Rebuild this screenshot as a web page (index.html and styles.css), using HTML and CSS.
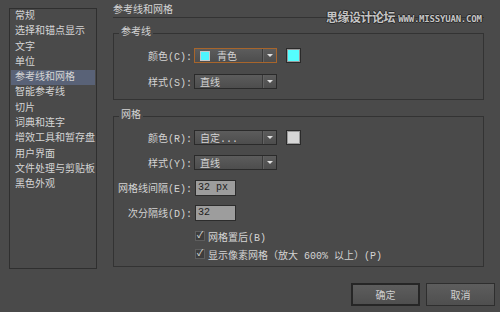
FILE: index.html
```html
<!DOCTYPE html>
<html lang="zh-CN">
<head>
    <meta charset="UTF-8">
    <title>首选项 - 参考线和网格</title>
    <link rel="stylesheet" href="styles.css">
</head>
<body>
    <div class="dialog">
        <div class="content">
            <ul class="nav">
                <li>常规</li>
                <li>选择和锚点显示</li>
                <li>文字</li>
                <li>单位</li>
                <li class="active">参考线和网格</li>
                <li>智能参考线</li>
                <li>切片</li>
                <li>词典和连字</li>
                <li>增效工具和暂存盘</li>
                <li>用户界面</li>
                <li>文件处理与剪贴板</li>
                <li>黑色外观</li>
            </ul>

            <div class="main">
                <h1 class="title">参考线和网格</h1>

                <fieldset class="group guides">
                    <legend>参考线</legend>
                    <div class="row">
                        <label>颜色(C):</label>
                        <div class="select focus">
                            <span class="chip cyan"></span>
                            <span class="val indent">青色</span>
                            <span class="arrow"></span>
                        </div>
                        <span class="swatch cyan"></span>
                    </div>
                    <div class="row">
                        <label>样式(S):</label>
                        <div class="select">
                            <span class="val">直线</span>
                            <span class="arrow"></span>
                        </div>
                    </div>
                </fieldset>

                <fieldset class="group grid">
                    <legend>网格</legend>
                    <div class="row">
                        <label>颜色(R):</label>
                        <div class="select">
                            <span class="val">自定...</span>
                            <span class="arrow"></span>
                        </div>
                        <span class="swatch gray"></span>
                    </div>
                    <div class="row">
                        <label>样式(Y):</label>
                        <div class="select">
                            <span class="val">直线</span>
                            <span class="arrow"></span>
                        </div>
                    </div>
                    <div class="row">
                        <label>网格线间隔(E):</label>
                        <input class="field" type="text" value="32 px">
                    </div>
                    <div class="row">
                        <label>次分隔线(D):</label>
                        <input class="field" type="text" value="32">
                    </div>
                    <div class="row check first">
                        <span class="box">✓</span>
                        <span>网格置后(B)</span>
                    </div>
                    <div class="row check">
                        <span class="box">✓</span>
                        <span>显示像素网格（放大 600% 以上）(P)</span>
                    </div>
                </fieldset>
            </div>
        </div>

        <div class="footer">
            <button class="btn default">确定</button>
            <button class="btn">取消</button>
        </div>

        <div class="mark">思缘设计论坛 <span>WWW.MISSYUAN.COM</span></div>
    </div>
</body>
</html>
```

FILE: styles.css
```css
* {box-sizing: border-box;}
html, body {margin: 0; padding: 0;}
body {
    background: #4a4a4a;
    color: #d4d4d4;
    font-family: "Liberation Mono", "Noto Sans CJK SC", monospace;
    font-size: 10px;
}
.dialog {
    position: relative;
    width: 500px;
    height: 312px;
    display: flex;
    flex-direction: column;
}
.content {
    display: flex;
    align-items: flex-start;
}

/* left list */
.nav {
    list-style: none;
    margin: 8px 0 0 9px;
    padding: 0;
    width: 88px;
    height: 261px;
    border: 1px solid #2f2f2f;
}
.nav li {
    height: 15.3px;
    line-height: 15.3px;
    padding-left: 4px;
    margin: 0 1px;
    white-space: nowrap;
}
.nav li.active {background: #596277;}

/* right side */
.main {
    margin-left: 16px;
    margin-top: 5px;
    width: 371px;
}
.title {
    margin: 0;
    font-size: 10px;
    font-weight: normal;
    line-height: 12px;
    border-bottom: 1px solid #333;
}
.group {
    margin: 8px 0 0;
    padding: 8px 0 10px;
    border: 1px solid #333;
    min-width: 0;
}
.group legend {
    padding: 0 2px;
    margin-left: 5px;
    line-height: 14px;
}
.group.grid {margin-top: 9px; padding: 7px 0 10px; height: 158px;}

.row {
    display: flex;
    align-items: center;
    height: 15px;
}
.row + .row {margin-top: 11px;}
.grid .row + .row {margin-top: 10px;}
.row label {
    width: 78px;
    margin-right: 2px;
    text-align: right;
    white-space: nowrap;
}

.select {
    position: relative;
    display: flex;
    align-items: center;
    width: 83px;
    height: 15px;
    border: 1px solid #2a2a2a;
    background: linear-gradient(#5c5c5c, #4d4d4d);
    padding-left: 5px;
}
.select.focus {border-color: #a8652b;}
.select .val {flex: 1;}
.select .val.indent {padding-left: 7px;}
.chip {
    width: 10px;
    height: 10px;
    border: 1px solid #c8c8c8;
}
.chip.cyan {background: #4ff5ff;}
.arrow {
    width: 14px;
    height: 13px;
    border-left: 1px solid #3a3a3a;
    box-shadow: inset 1px 0 #626262;
    display: flex;
    align-items: center;
    justify-content: center;
}
.arrow::after {
    content: "";
    border-left: 3px solid transparent;
    border-right: 3px solid transparent;
    border-top: 3px solid #e0e0e0;
}
.swatch {
    width: 15px;
    height: 15px;
    margin-left: 9px;
    border: 1px solid #2a2a2a;
    box-shadow: inset 0 0 0 1px #9a9a9a;
}
.swatch.cyan {background: #55fdff;}
.swatch.gray {background: #d6d6d6;}

.field {
    width: 41px;
    height: 16px;
    margin-left: 1px;
    padding: 0 2px;
    border: 1px solid #2c2c2c;
    background: #9d9d9d;
    color: #1e1e1e;
    font: 10px "Liberation Mono", "Noto Sans CJK SC", monospace;
}

.check {
    padding-left: 81px;
    height: 14px;
}
.grid .row.check.first {margin-top: 9px;}
.grid .row.check + .row.check {margin-top: 4px;}
.box {
    width: 10px;
    height: 10px;
    margin-right: 3px;
    background: #3d3d3d;
    border: 1px solid #5e5e5e;
    color: #e0e0e0;
    font-size: 9px;
    line-height: 8px;
    text-align: center;
}

/* buttons */
.footer {
    display: flex;
    justify-content: flex-end;
    gap: 6px;
    margin-top: 14px;
    padding-right: 5px;
}
.btn {
    width: 69px;
    height: 23px;
    border: 1px solid #2e2e2e;
    background: linear-gradient(#5d5d5d, #4f4f4f);
    color: #cfcfcf;
    font: 10px "Noto Sans CJK SC", "Liberation Sans", sans-serif;
}
.btn.default {border: 2px solid #262626;}

/* watermark */
.mark {
    position: absolute;
    top: 8px;
    left: 326px;
    color: #c4c4c4;
    font-family: "Noto Sans CJK SC", sans-serif;
    font-size: 12px;
    font-weight: bold;
    letter-spacing: -0.5px;
    text-shadow: 1px 0 #2a2a2a, -1px 0 #2a2a2a, 0 1px #2a2a2a, 0 -1px #2a2a2a;
    white-space: nowrap;
}
.mark span {
    font-family: "DejaVu Sans Mono", monospace;
    font-size: 9px;
    letter-spacing: -0.2px;
    margin-left: 1px;
}
```
